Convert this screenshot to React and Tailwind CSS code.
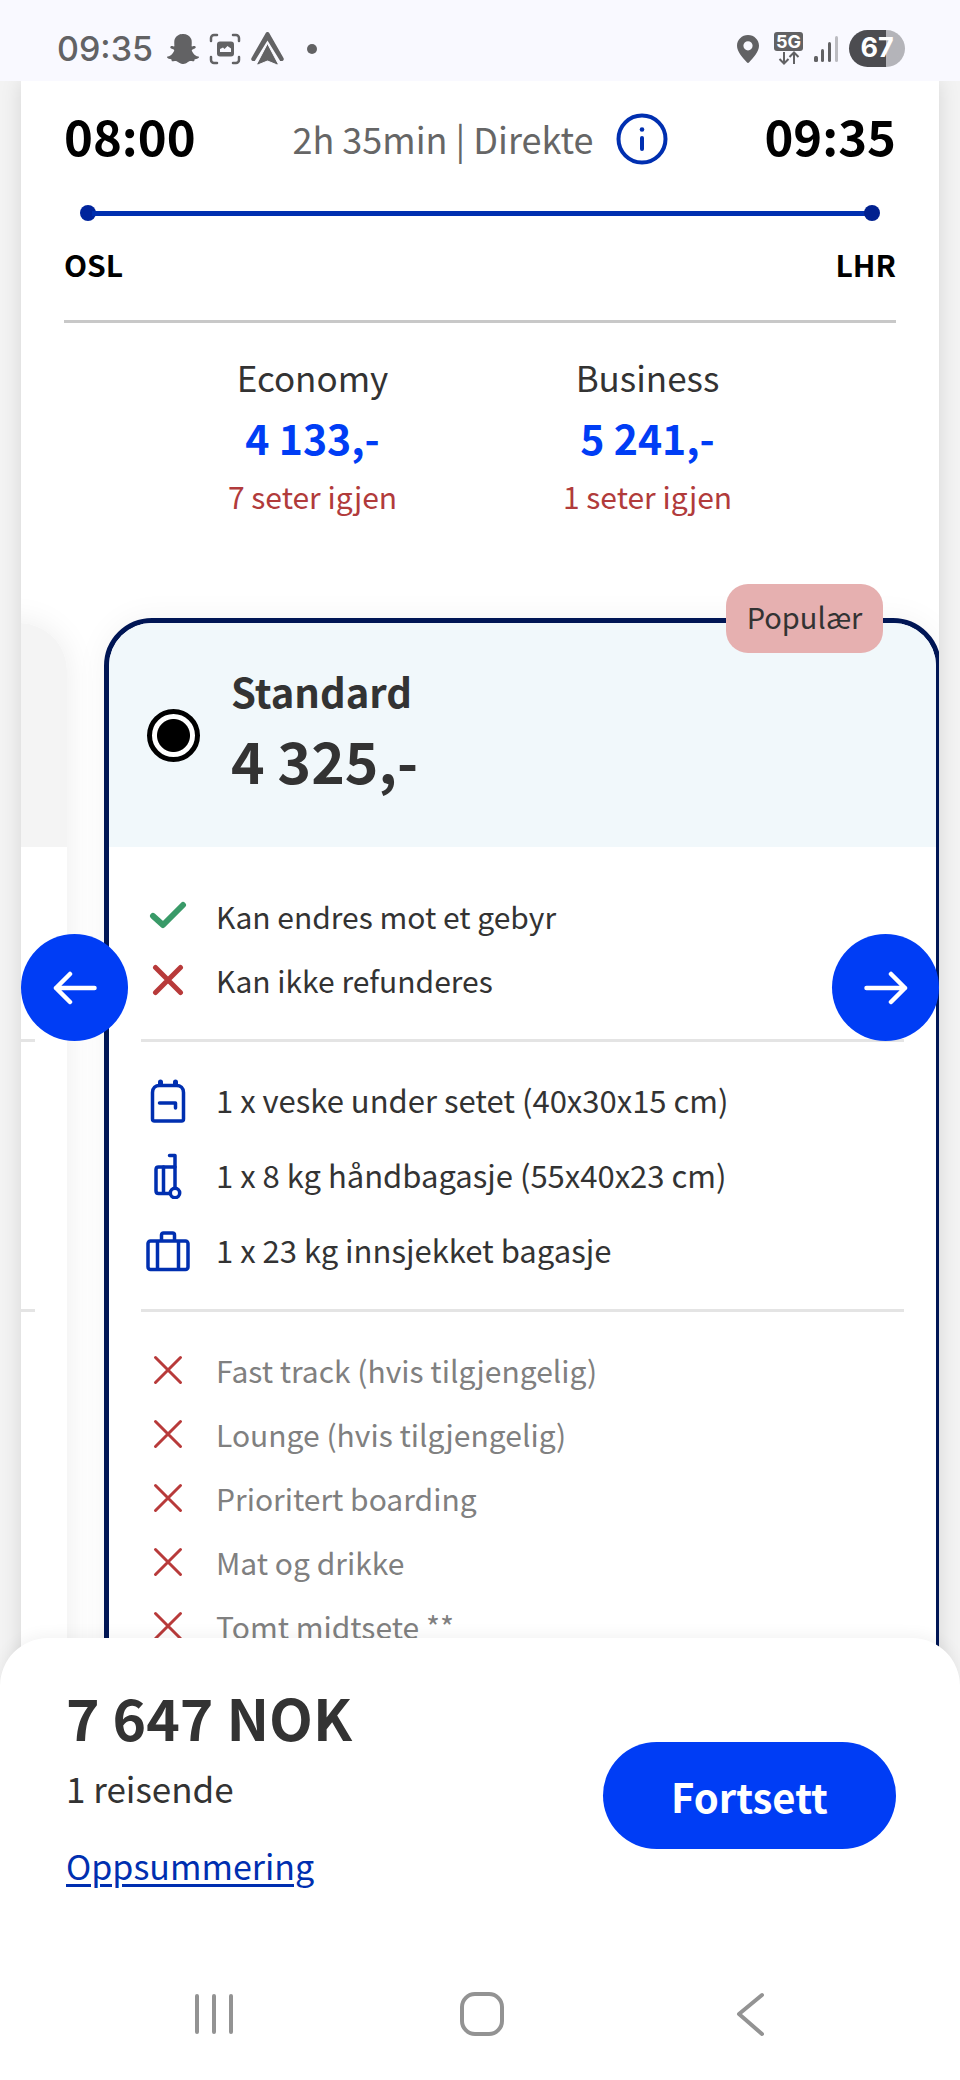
import { useState } from 'react';
import { FaSnapchatGhost } from 'react-icons/fa';

const cabins = [
  { name: 'Economy', price: '4 133,-', seats: '7 seter igjen' },
  { name: 'Business', price: '5 241,-', seats: '1 seter igjen' },
];

const rules = [
  { text: 'Kan endres mot et gebyr', ok: true },
  { text: 'Kan ikke refunderes', ok: false },
];

const bags = [
  { text: '1 x veske under setet (40x30x15 cm)', Icon: BackpackIcon },
  { text: '1 x 8 kg håndbagasje (55x40x23 cm)', Icon: TrolleyIcon },
  { text: '1 x 23 kg innsjekket bagasje', Icon: SuitcaseIcon },
];

const extras = ['Fast track (hvis tilgjengelig)', 'Lounge (hvis tilgjengelig)', 'Prioritert boarding', 'Mat og drikke', 'Tomt midtsete **'];

export default function App() {
  const [fare, setFare] = useState('standard');

  return (
    <div className="flex h-screen flex-col bg-[#f3f3f3] font-['Noto_Sans_CJK_SC','Noto_Sans',sans-serif] text-[#333333]">
      <StatusBar />

      {/* The fares run on behind the rounded corners of the footer */}
      <main className="mx-[21px] -mb-12 min-h-0 flex-1 overflow-hidden bg-white shadow-[0_0_20px_rgba(0,0,0,0.12)]">
        <section className="px-[43px] pt-[26px]">
          <div className="flex h-16 items-center justify-between text-black">
            <span className="pb-2 text-[49px] font-bold">08:00</span>
            <div className="flex items-center gap-[22px] text-[36px] text-[#666666]">
              <span className="pb-[2px]">2h 35min | Direkte</span>
              <button aria-label="Info"><InfoIcon /></button>
            </div>
            <span className="pb-2 text-[49px] font-bold">09:35</span>
          </div>

          <div className="mx-4 mt-[34px] flex items-center">
            <span className="size-4 rounded-full bg-[#00249c]"></span>
            <span className="-mx-1 h-[5px] flex-1 bg-[#002fb0]"></span>
            <span className="size-4 rounded-full bg-[#00208f]"></span>
          </div>

          <div className="mt-[23px] flex justify-between text-[30px] leading-10 font-bold text-black">
            <span>OSL</span>
            <span>LHR</span>
          </div>
          <hr className="mt-9 border-t-[3px] border-[#c8c8c8]" />
        </section>

        <section className="mt-[26px] grid grid-cols-2 px-[124px]">
          {cabins.map(c => (
            <button key={c.name} className="flex flex-col items-center">
              <span className="text-[35px] leading-14">{c.name}</span>
              <span className="text-[41px] leading-16 font-bold text-[#003df5]">{c.price}</span>
              <span className="text-[30px] leading-[54px] text-[#b13b3b]">{c.seats}</span>
            </button>
          ))}
        </section>

        {/* Fare carousel */}
        <section className="relative flex items-start gap-[37px] overflow-hidden pt-[95px]">
          <PreviousFare />

          <article className="relative w-[calc(100%-81px)] shrink-0 rounded-t-[48px] border-[5px] border-[#001655] bg-white shadow-[0_0_32px_rgba(0,0,0,0.05)]">
            <span className="absolute -top-[39px] right-[53px] flex h-[69px] w-[157px] items-center justify-center rounded-[22px] bg-[#e6b0b0] pb-1 text-[29px]">Populær</span>

            <label className="flex h-56 items-center gap-[31px] rounded-t-[43px] bg-[#f1f8fb] pl-[38px]">
              <input type="radio" name="fare" value="standard" checked={fare === 'standard'} onChange={e => setFare(e.target.value)}
                className="size-[53px] appearance-none rounded-full border-[5px] border-black bg-white bg-clip-padding p-[5px] checked:bg-[radial-gradient(circle,black_16px,transparent_17px)]" />
              <span className="flex flex-col pb-5">
                <span className="text-[40px] leading-17 font-bold">Standard</span>
                <span className="text-[57px] leading-17 font-bold">4 325,-</span>
              </span>
            </label>

            <div className="px-8 text-[30px]">
              <ul className="pt-[37px] pb-[27px]">
                {rules.map(r => (
                  <li key={r.text} className="flex h-16 items-center gap-[21px]">
                    <span className="flex w-[54px] justify-center">{r.ok ? <CheckIcon /> : <CrossIcon bold />}</span>
                    {r.text}
                  </li>
                ))}
              </ul>
              <hr className="border-t-[3px] border-[#e4e4e4]" />
              <ul className="py-[21px] text-[31px]">
                {bags.map(({ text, Icon }) => (
                  <li key={text} className="flex h-[75px] items-center gap-[21px]">
                    <span className="flex w-[54px] justify-center"><Icon /></span>
                    {text}
                  </li>
                ))}
              </ul>
              <hr className="border-t-[3px] border-[#e4e4e4]" />
              <ul className="py-[26px] text-[#808080]">
                {extras.map(text => (
                  <li key={text} className="flex h-16 items-center gap-[21px]">
                    <span className="flex w-[54px] justify-center"><CrossIcon /></span>
                    {text}
                  </li>
                ))}
              </ul>
            </div>
          </article>

          <button aria-label="Forrige" className="absolute top-[411px] left-0 flex size-[107px] items-center justify-center rounded-full bg-[#003df5]">
            <ArrowIcon className="rotate-180" />
          </button>
          <button aria-label="Neste" className="absolute top-[411px] right-0 flex size-[107px] items-center justify-center rounded-full bg-[#003df5]">
            <ArrowIcon />
          </button>
        </section>
      </main>

      <footer className="relative z-10 shrink-0 rounded-t-[48px] bg-white shadow-[0_-2px_16px_rgba(0,0,0,0.06)]">
        <div className="flex items-end justify-between px-16 pt-[38px]">
          <div className="flex flex-col items-start pl-[2px]">
            <strong className="text-[57px] leading-20 font-bold">7 647 NOK</strong>
            <span className="text-[35px] leading-16">1 reisende</span>
            <a href="#oppsummering" className="mt-[14px] text-[34px] leading-16 text-[#002fb0] underline decoration-[3px] underline-offset-4">Oppsummering</a>
          </div>
          <button className="mb-[49px] h-[107px] w-[293px] rounded-full bg-[#003df5] text-[40px] font-bold text-white">Fortsett</button>
        </div>
        <SystemNav />
      </footer>
    </div>
  );
}

// Right edge of the fare that is scrolled out to the left
function PreviousFare() {
  return (
    <div className="mt-[5px] -ml-[calc(100%-46px)] w-full shrink-0 self-stretch rounded-t-[48px] bg-white shadow-[0_0_32px_rgba(0,0,0,0.08)]">
      <div className="h-56 rounded-t-[48px] bg-[#f4f4f4]"></div>
      <div className="px-8 pt-[192px]">
        <hr className="border-t-[3px] border-[#e4e4e4]" />
        <hr className="mt-[267px] border-t-[3px] border-[#e4e4e4]" />
      </div>
    </div>
  );
}

function StatusBar() {
  return (
    <header className="relative z-10 flex h-[81px] shrink-0 items-center justify-between bg-[#f9f9ff] pt-4 pr-[55px] pl-[57px] text-[#626264]">
      <div className="flex items-center gap-[10px]">
        <span className="mr-1 font-['Inter',sans-serif] text-[34px] leading-10 font-medium">09:35</span>
        <FaSnapchatGhost size={32} />
        <svg width="32" height="32" viewBox="0 0 32 32" fill="none" stroke="currentColor" strokeWidth="2.500" strokeLinecap="round">
          <path d="M2 8V5a3 3 0 0 1 3-3h3M24 2h3a3 3 0 0 1 3 3v3M30 24v3a3 3 0 0 1-3 3h-3M8 30H5a3 3 0 0 1-3-3v-3" />
          <rect x="8" y="8.500" width="17" height="15" rx="3" fill="currentColor" stroke="none" />
          <path d="M11 19v-3l3-1.500 1.500 1.500 3-3 3.500 2.500V19z" fill="#f9f9ff" stroke="none" />
        </svg>
        <svg width="33" height="33" viewBox="0 0 33 33" fill="currentColor">
          <path d="M16.500 0c1 0 1.500.6 2 1.400L32.500 26c.8 1.700-.2 3-2 3h-1.300L16.500 8.500 3.800 29H2.500c-1.800 0-2.800-1.300-2-3L14.500 1.400c.5-.8 1-1.400 2-1.400z" />
          <path d="M16.500 10.500 7.500 26 4.500 29h24l-3-3z" opacity="0" />
          <path d="M16.500 11.500 27 31.500c.3.800-.3 1.500-1.200 1.300L16.500 29l-9.300 3.800c-.9.200-1.500-.5-1.200-1.300z" stroke="#f9f9ff" strokeWidth="1" />
        </svg>
        <span className="ml-[13px] size-[10px] rounded-full bg-current"></span>
      </div>

      <div className="flex items-center">
        <svg width="22" height="28" viewBox="0 0 22 28" fill="currentColor">
          <path fillRule="evenodd" d="M11 0C4.900 0 0 4.800 0 10.800 0 17 6 23 9.800 27.300c.7.800 1.700.8 2.400 0C16 23 22 17 22 10.800 22 4.800 17.100 0 11 0zm0 6.200a4.600 4.600 0 1 1 0 9.200 4.600 4.600 0 0 1 0-9.200z" />
        </svg>
        <div className="ml-[15px] flex flex-col items-center">
          <span className="flex h-[19px] w-[29px] items-center justify-center rounded-[3px] bg-current font-['Inter',sans-serif] text-[18px] font-bold"><span className="text-white">5G</span></span>
          <svg width="22" height="14" viewBox="0 0 22 14" fill="none" stroke="currentColor" strokeWidth="2">
            <path d="M6 1v11M1.500 8 6 12.500 10.500 8M16 13V2M11.500 6 16 1.500 20.500 6" />
          </svg>
        </div>
        <svg className="ml-[11px]" width="25" height="26" viewBox="0 0 25 26" fill="currentColor">
          <rect y="20" width="4" height="6" rx="1.500" />
          <rect x="7" y="13" width="3" height="13" rx="1.500" />
          <rect x="14" y="6" width="3" height="20" rx="1.500" />
          <rect x="21" width="3" height="26" rx="1.500" opacity=".4" />
        </svg>
        <span className="ml-[10px] flex h-[37px] w-[56px] items-center justify-center rounded-full bg-linear-to-r from-[#4c4c50] from-66% to-[#b4b4b9] to-66% font-['Inter',sans-serif] text-[27px] font-bold text-white">67</span>
      </div>
    </header>
  );
}

function SystemNav() {
  return (
    <nav className="mt-[60px] grid grid-cols-3 pt-[32px] pr-[76px] pl-[80px] pb-[42px] text-[#939393]">
      <button aria-label="Recents" className="flex justify-center">
        <svg width="44" height="48" viewBox="0 0 44 48" stroke="currentColor" strokeWidth="4" strokeLinecap="round"><path d="M5 6v36M22 6v36M39 6v36" /></svg>
      </button>
      <button aria-label="Home" className="flex justify-center">
        <svg width="48" height="48" viewBox="0 0 48 48" fill="none" stroke="currentColor" strokeWidth="4"><rect x="4" y="4" width="40" height="40" rx="13" /></svg>
      </button>
      <button aria-label="Back" className="flex justify-center">
        <svg width="48" height="48" viewBox="0 0 48 48" fill="none" stroke="currentColor" strokeWidth="4" strokeLinecap="round" strokeLinejoin="round"><path d="M36 5 13 24l23 20" /></svg>
      </button>
    </nav>
  );
}

function InfoIcon() {
  return (
    <svg width="52" height="52" viewBox="0 0 52 52" fill="none" stroke="#002fb0">
      <circle cx="26" cy="26" r="23.500" strokeWidth="4" />
      <path d="M26 25v11" strokeWidth="4" strokeLinecap="round" />
      <circle cx="26" cy="16.500" r="2.300" fill="#002fb0" stroke="none" />
    </svg>
  );
}

function CheckIcon() {
  return (
    <svg width="40" height="30" viewBox="0 0 40 30" fill="none" stroke="#399a68" strokeWidth="6" strokeLinecap="round" strokeLinejoin="round">
      <path d="M5 15l10 9L35 4" />
    </svg>
  );
}

function CrossIcon({ bold }) {
  return (
    <svg width="32" height="32" viewBox="0 0 32 32" fill="none" stroke="#b83a3a" strokeWidth={bold ? 5 : 3} strokeLinecap="round">
      <path d="M3.500 3.500l25 25M28.500 3.500l-25 25" />
    </svg>
  );
}

function ArrowIcon({ className }) {
  return (
    <svg className={className} width="44" height="34" viewBox="0 0 44 34" fill="none" stroke="white" strokeWidth="4.500" strokeLinecap="round" strokeLinejoin="round">
      <path d="M2.500 17H41M27 3l14 14-14 14" />
    </svg>
  );
}

function BackpackIcon() {
  return (
    <svg width="36" height="44" viewBox="0 0 36 44" fill="none" stroke="#002fb0" strokeWidth="3.500" strokeLinecap="round" strokeLinejoin="round">
      <path d="M2.500 13.500c0-4.500 3-7 7-7h17c4 0 7 2.500 7 7V40c0 1.500-.6 2-2 2h-27c-1.400 0-2-.5-2-2z" />
      <path d="M9.500 24h16v5" />
      <path d="M10.500 3v2M25.500 3v2" strokeWidth="5" />
    </svg>
  );
}

function TrolleyIcon() {
  return (
    <svg width="28" height="46" viewBox="0 0 28 46" fill="none" stroke="#002fb0" strokeWidth="3.500" strokeLinecap="round" strokeLinejoin="round">
      <path d="M15.500 2.500h5.500V34" />
      <path d="M21 14H4.500c-1.500 0-2.500 1-2.500 2.500V38c0 1.500 1 2.500 2.500 2.500H16" />
      <path d="M9.500 14v26" />
      <circle cx="21" cy="40" r="4.700" />
    </svg>
  );
}

function SuitcaseIcon() {
  return (
    <svg width="44" height="42" viewBox="0 0 44 42" fill="none" stroke="#002fb0" strokeWidth="3.500" strokeLinejoin="round">
      <rect x="2" y="11" width="40" height="28.500" rx="2.500" />
      <path d="M11.500 11v28M32.500 11v28M15.500 11V5c0-1.300.7-2 2-2h9c1.300 0 2 .7 2 2v6" />
    </svg>
  );
}
